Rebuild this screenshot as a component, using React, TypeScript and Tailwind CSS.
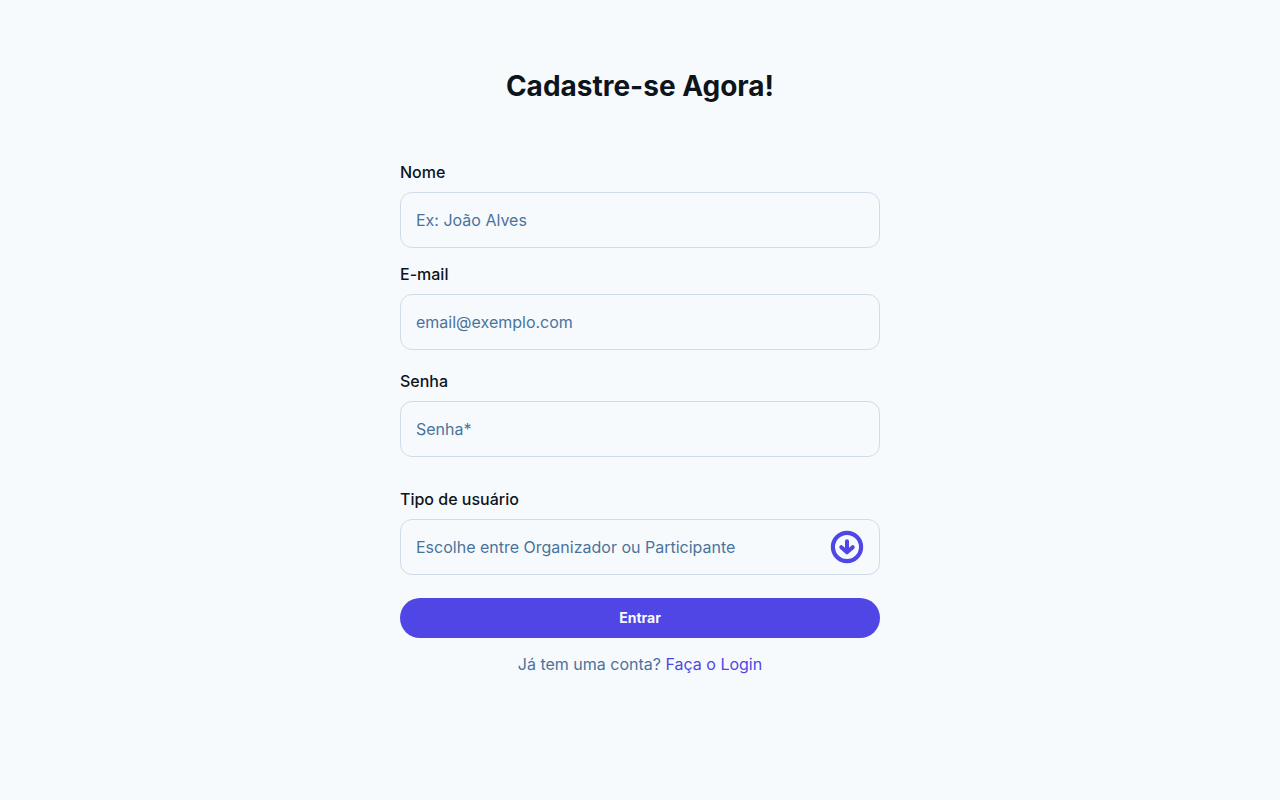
import { useId, type ReactNode } from "react";

const fieldClass =
  "h-14 w-full rounded-xl border border-[#cfdbe8] bg-[#f7fafc] px-[15px] text-base text-[#4a739c] outline-none placeholder:text-[#4a739c] focus:border-[#4f46e5]";

type FieldProps = {
  label: string;
  children: (id: string) => ReactNode;
};

function Field({ label, children }: FieldProps) {
  const id = useId();
  return (
    <div className="flex flex-col gap-2">
      <label htmlFor={id} className="text-base font-medium text-[#0d141c]">
        {label}
      </label>
      {children(id)}
    </div>
  );
}

function ArrowDownCircle() {
  return (
    <svg
      viewBox="0 0 34 34"
      className="pointer-events-none absolute top-[11px] right-4 size-[34px]"
      fill="none"
      stroke="#4f46e5"
      strokeWidth="4.2"
      strokeLinecap="round"
      strokeLinejoin="round"
      aria-hidden="true"
    >
      <circle cx="17" cy="17" r="14.1" />
      <path d="M17 11.2v11M11.3 17.2l5.7 5.1 5.7-5.1" strokeWidth="4" />
    </svg>
  );
}

export default function App() {
  return (
    <main className="flex min-h-screen flex-col items-center bg-[#f7fafc] px-4 pt-17 pb-8 font-['Inter',sans-serif]">
      <h1 className="text-center text-[28px] leading-9 font-bold text-[#0d141c]">Cadastre-se Agora!</h1>
      <form className="mt-14 flex w-full max-w-120 flex-col" onSubmit={(e) => e.preventDefault()}>
        <Field label="Nome">
          {(id) => <input id={id} type="text" placeholder="Ex: João Alves" className={fieldClass} />}
        </Field>
        <div className="mt-3.5">
          <Field label="E-mail">
            {(id) => <input id={id} type="email" placeholder="email@exemplo.com" className={fieldClass} />}
          </Field>
        </div>
        <div className="mt-[19px]">
          <Field label="Senha">
            {(id) => <input id={id} type="password" placeholder="Senha*" className={fieldClass} />}
          </Field>
        </div>
        <div className="mt-7.5">
          <Field label="Tipo de usuário">
            {(id) => (
              <div className="relative">
                <select id={id} defaultValue="" className={`${fieldClass} appearance-none`}>
                  <option value="" disabled>
                    Escolhe entre Organizador ou Participante
                  </option>
                  <option value="organizador">Organizador</option>
                  <option value="participante">Participante</option>
                </select>
                <ArrowDownCircle />
              </div>
            )}
          </Field>
        </div>
        <button type="submit" className="mt-[23px] h-10 rounded-full bg-[#4f46e5] text-sm font-bold text-[#f7fafc]">
          Entrar
        </button>
      </form>
      <p className="mt-3.5 text-center text-base text-[#4a739c]">
        Já tem uma conta?{" "}
        <a href="#login" className="text-[#4f46e5]">
          Faça o Login
        </a>
      </p>
    </main>
  );
}
